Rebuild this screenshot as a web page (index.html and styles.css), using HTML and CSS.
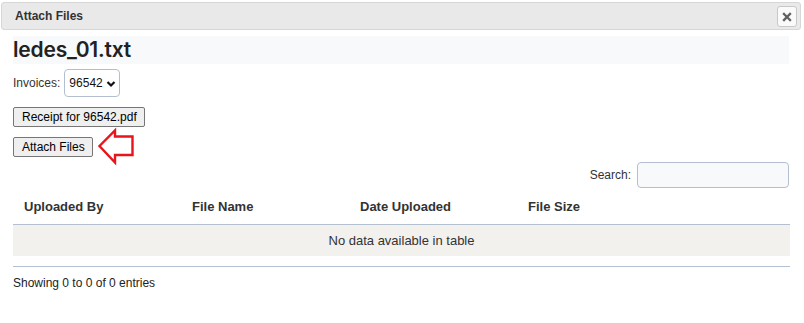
FILE: index.html
```html
<!DOCTYPE html>
<html>
<head>
<meta charset="utf-8">
<link rel="stylesheet" href="styles.css">
</head>
<body>
<div class="dialog">
  <div class="titlebar">
    <span class="title">Attach Files</span>
    <button class="close" type="button" aria-label="Close">
      <svg width="10" height="10" viewBox="0 0 10 10"><path d="M2 2 L8 8 M8 2 L2 8" stroke="#606060" stroke-width="2.3" stroke-linecap="square"/></svg>
    </button>
  </div>
  <div class="content">
    <h2 class="filename">ledes_01.txt</h2>
    <div class="invoice-row">
      <label class="label">Invoices:</label>
      <span class="select-wrap">
        <select class="select"><option>96542</option></select>
        <svg class="chev" width="10" height="8" viewBox="0 0 10 8"><path d="M1.5 2 L5 5.5 L8.5 2" fill="none" stroke="#111" stroke-width="2.2"/></svg>
      </span>
    </div>
    <div class="btn-row"><button class="btn" type="button">Receipt for 96542.pdf</button></div>
    <div class="btn-row attach-row">
      <button class="btn" type="button">Attach Files</button>
      <svg class="arrow" width="40" height="40" viewBox="0 0 40 40"><polygon points="2.5,19 18,3.5 18,9.5 35.5,9.5 35.5,28 18,28 18,35.5" fill="none" stroke="#e8141c" stroke-width="2.4" stroke-linejoin="miter"/></svg>
    </div>
    <div class="search-row">
      <label class="label">Search:</label>
      <input class="search" type="search">
    </div>
    <div class="table-wrap">
      <table class="grid">
        <colgroup><col class="c"><col class="c"><col class="c"><col class="c"><col></colgroup>
        <thead>
          <tr><th>Uploaded By</th><th>File Name</th><th>Date Uploaded</th><th>File Size</th><th></th></tr>
        </thead>
        <tbody>
          <tr><td class="empty" colspan="5">No data available in table</td></tr>
        </tbody>
      </table>
    </div>
    <div class="info">Showing 0 to 0 of 0 entries</div>
  </div>
</div>
</body>
</html>
```

FILE: styles.css
```css
html, body {
  margin: 0;
  padding: 0;
  background: #fff;
}
body {
  font-family: "Liberation Sans", Arial, sans-serif;
  color: #222;
}
.dialog {
  padding: 2px 3px 0 1px;
}
.titlebar {
  height: 26px;
  border: 1px solid #d6d6d6;
  border-radius: 3px;
  background: #e9e9e9;
  display: flex;
  align-items: center;
  justify-content: space-between;
  padding: 0 3px 0 13px;
}
.title {
  font-size: 12px;
  font-weight: bold;
  color: #333;
}
.close {
  width: 20px;
  height: 21px;
  margin-top: 1px;
  padding: 0;
  border: 1px solid #c8c8c8;
  border-radius: 3px;
  background: #fafafa;
  display: flex;
  align-items: center;
  justify-content: center;
}
.content {
  padding: 0 10px 0 12px;
}
.filename {
  margin: 6px 0 0 0;
  height: 28px;
  width: 776px;
  background: #f8f9fb;
  font-family: Inter, "Open Sans", sans-serif;
  font-weight: 600;
  font-size: 21px;
  line-height: 28px;
  color: #222;
  letter-spacing: -0.2px;
}
.invoice-row {
  margin-top: 5px;
  display: flex;
  align-items: center;
  gap: 4px;
}
.label {
  font-size: 12px;
  color: #333;
}
.select-wrap {
  position: relative;
  display: inline-block;
}
.select {
  appearance: none;
  -webkit-appearance: none;
  width: 56px;
  height: 28px;
  border: 1px solid #b3bfd0;
  border-radius: 4px;
  background: #fff;
  font-family: "Liberation Sans", Arial, sans-serif;
  font-size: 12px;
  color: #111;
  padding: 0 0 0 4px;
  display: block;
}
.chev {
  position: absolute;
  right: 4px;
  top: 11px;
  pointer-events: none;
}
.btn-row {
  margin-top: 10px;
  display: flex;
}
.attach-row {
  position: relative;
}
.btn {
  font-family: "Liberation Sans", Arial, sans-serif;
  font-size: 12px;
  color: #000;
  height: 20px;
  padding: 0 7px 0 8px;
  background: #efefef;
  border: 1px solid #767676;
  border-radius: 2px;
}
.arrow {
  position: absolute;
  left: 84px;
  top: -10px;
}
.search-row {
  margin-top: 5px;
  display: flex;
  justify-content: flex-end;
  align-items: center;
  gap: 6px;
  width: 777px;
}
.search {
  width: 152px;
  height: 26px;
  box-sizing: border-box;
  border: 1px solid #b3bfd0;
  border-radius: 4px;
  background: #f8f9fb;
  margin-right: 1px;
}
.table-wrap {
  width: 777px;
  padding-bottom: 10px;
  border-bottom: 1px solid #b3c0d0;
}
.grid {
  width: 777px;
  border-collapse: collapse;
  table-layout: fixed;
}
.grid col.c {
  width: 168px;
}
.grid th {
  text-align: left;
  font-size: 13px;
  font-weight: bold;
  color: #333;
  padding: 11px 11px 9px 11px;
  line-height: 16px;
  border-bottom: 1px solid #b3c0d0;
}
.grid td.empty {
  text-align: center;
  font-size: 13px;
  color: #333;
  background: #f2f1ee;
  padding: 8px 0;
  line-height: 15px;
}
.info {
  margin-top: 9px;
  font-size: 12px;
  color: #222;
  line-height: 14px;
}
```
